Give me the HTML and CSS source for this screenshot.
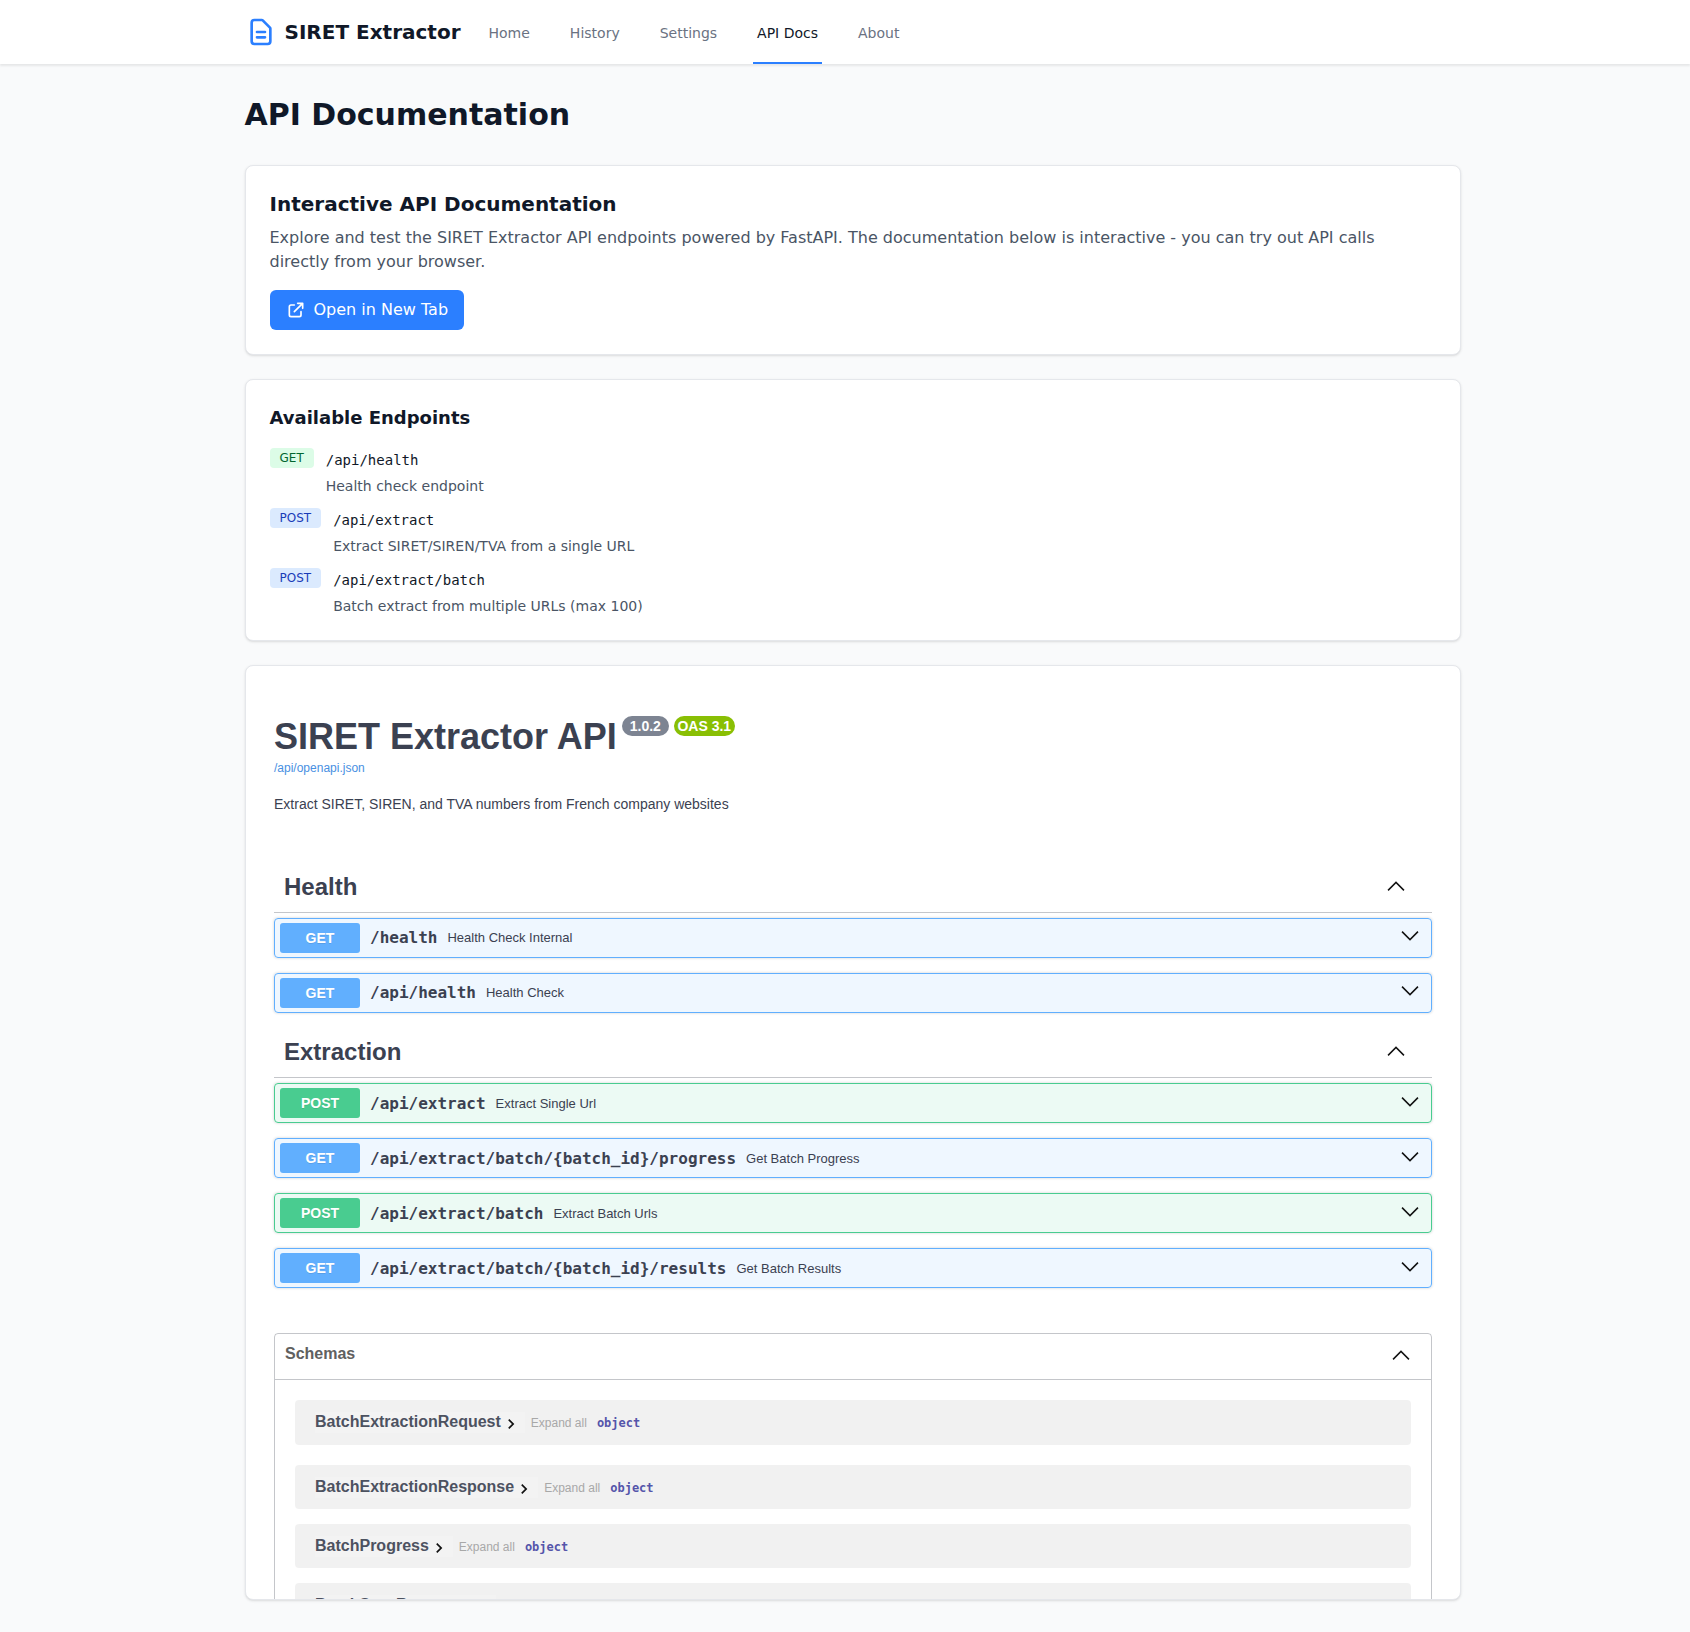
FILE: index.html
```html
<!DOCTYPE html>
<html lang="en">
<head>
<meta charset="utf-8">
<title>SIRET Extractor - API Docs</title>
<link rel="stylesheet" href="styles.css">
</head>
<body>
<nav class="nav">
  <div class="nav-inner">
    <a class="brand">
      <svg class="brand-icon" viewBox="0 0 24 24" fill="none" stroke="currentColor" stroke-width="2" stroke-linecap="round" stroke-linejoin="round"><path d="M9 12h6M9 16h6M17 21H7a2 2 0 0 1-2-2V5a2 2 0 0 1 2-2h5.586a1 1 0 0 1 .707.293l5.414 5.414a1 1 0 0 1 .293.707V19a2 2 0 0 1-2 2z"/></svg>
      <span>SIRET Extractor</span>
    </a>
    <div class="nav-links">
      <a class="nav-link">Home</a>
      <a class="nav-link">History</a>
      <a class="nav-link">Settings</a>
      <a class="nav-link active">API Docs</a>
      <a class="nav-link">About</a>
    </div>
  </div>
</nav>
<main class="main">
  <h1 class="page-title">API Documentation</h1>
  <section class="card intro">
    <h2 class="card-title">Interactive API Documentation</h2>
    <p class="intro-text">Explore and test the SIRET Extractor API endpoints powered by FastAPI. The documentation below is interactive - you can try out API calls directly from your browser.</p>
    <a class="btn">
      <svg class="btn-icon" viewBox="0 0 24 24" fill="none" stroke="currentColor" stroke-width="2" stroke-linecap="round" stroke-linejoin="round"><path d="M10 6H6a2 2 0 0 0-2 2v10a2 2 0 0 0 2 2h10a2 2 0 0 0 2-2v-4M14 4h6m0 0v6m0-6L10 14"/></svg>
      Open in New Tab
    </a>
  </section>
  <section class="card endpoints">
    <h2 class="card-subtitle">Available Endpoints</h2>
    <div class="ep-list">
      <div class="ep">
        <span class="ep-badge ep-get">GET</span>
        <div><code class="ep-path">/api/health</code><p class="ep-desc">Health check endpoint</p></div>
      </div>
      <div class="ep">
        <span class="ep-badge ep-post">POST</span>
        <div><code class="ep-path">/api/extract</code><p class="ep-desc">Extract SIRET/SIREN/TVA from a single URL</p></div>
      </div>
      <div class="ep">
        <span class="ep-badge ep-post">POST</span>
        <div><code class="ep-path">/api/extract/batch</code><p class="ep-desc">Batch extract from multiple URLs (max 100)</p></div>
      </div>
    </div>
  </section>
  <section class="card swagger">
    <div class="sw-info">
      <div class="sw-title-row">
        <h2 class="sw-title">SIRET Extractor API</h2>
        <span class="pill pill-version">1.0.2</span>
        <span class="pill pill-oas">OAS 3.1</span>
      </div>
      <a class="sw-link">/api/openapi.json</a>
      <p class="sw-desc">Extract SIRET, SIREN, and TVA numbers from French company websites</p>
    </div>

    <div class="tag tag-first">
      <h3 class="tag-name">Health</h3>
      <svg class="tag-chevron" viewBox="0 0 20 20"><path d="M17.418 14.908 10 7.49l-7.418 7.418L1.5 13.826 10 5.326l8.5 8.5z"/></svg>
    </div>
    <div class="op op-get"><span class="method">GET</span><span class="op-path">/health</span><span class="op-sum">Health Check Internal</span><svg class="op-chevron" viewBox="0 0 20 20"><path d="M17.418 6.109 10 13.527 2.582 6.109 1.5 7.191l8.5 8.5 8.5-8.5z"/></svg></div>
    <div class="op op-get"><span class="method">GET</span><span class="op-path">/api/health</span><span class="op-sum">Health Check</span><svg class="op-chevron" viewBox="0 0 20 20"><path d="M17.418 6.109 10 13.527 2.582 6.109 1.5 7.191l8.5 8.5 8.5-8.5z"/></svg></div>

    <div class="tag tag-next">
      <h3 class="tag-name">Extraction</h3>
      <svg class="tag-chevron" viewBox="0 0 20 20"><path d="M17.418 14.908 10 7.49l-7.418 7.418L1.5 13.826 10 5.326l8.5 8.5z"/></svg>
    </div>
    <div class="op op-post"><span class="method">POST</span><span class="op-path">/api/extract</span><span class="op-sum">Extract Single Url</span><svg class="op-chevron" viewBox="0 0 20 20"><path d="M17.418 6.109 10 13.527 2.582 6.109 1.5 7.191l8.5 8.5 8.5-8.5z"/></svg></div>
    <div class="op op-get"><span class="method">GET</span><span class="op-path">/api/extract/batch/{batch_id}/progress</span><span class="op-sum">Get Batch Progress</span><svg class="op-chevron" viewBox="0 0 20 20"><path d="M17.418 6.109 10 13.527 2.582 6.109 1.5 7.191l8.5 8.5 8.5-8.5z"/></svg></div>
    <div class="op op-post"><span class="method">POST</span><span class="op-path">/api/extract/batch</span><span class="op-sum">Extract Batch Urls</span><svg class="op-chevron" viewBox="0 0 20 20"><path d="M17.418 6.109 10 13.527 2.582 6.109 1.5 7.191l8.5 8.5 8.5-8.5z"/></svg></div>
    <div class="op op-get"><span class="method">GET</span><span class="op-path">/api/extract/batch/{batch_id}/results</span><span class="op-sum">Get Batch Results</span><svg class="op-chevron" viewBox="0 0 20 20"><path d="M17.418 6.109 10 13.527 2.582 6.109 1.5 7.191l8.5 8.5 8.5-8.5z"/></svg></div>

    <div class="schemas">
      <div class="schemas-head">
        <span class="schemas-title">Schemas</span>
        <svg class="tag-chevron schemas-chevron" viewBox="0 0 20 20"><path d="M17.418 14.908 10 7.49l-7.418 7.418L1.5 13.826 10 5.326l8.5 8.5z"/></svg>
      </div>
      <div class="schemas-body">
        <div class="model model-first"><span class="model-btn"><span class="model-name">BatchExtractionRequest</span><svg class="model-arrow" viewBox="0 0 24 24"><path d="M10 6 8.59 7.41 13.17 12l-4.58 4.59L10 18l6-6z"/></svg></span><span class="model-expand">Expand all</span><span class="model-type">object</span></div>
        <div class="model"><span class="model-btn"><span class="model-name">BatchExtractionResponse</span><svg class="model-arrow" viewBox="0 0 24 24"><path d="M10 6 8.59 7.41 13.17 12l-4.58 4.59L10 18l6-6z"/></svg></span><span class="model-expand">Expand all</span><span class="model-type">object</span></div>
        <div class="model"><span class="model-btn"><span class="model-name">BatchProgress</span><svg class="model-arrow" viewBox="0 0 24 24"><path d="M10 6 8.59 7.41 13.17 12l-4.58 4.59L10 18l6-6z"/></svg></span><span class="model-expand">Expand all</span><span class="model-type">object</span></div>
        <div class="model"><span class="model-btn"><span class="model-name">BatchStartResponse</span><svg class="model-arrow" viewBox="0 0 24 24"><path d="M10 6 8.59 7.41 13.17 12l-4.58 4.59L10 18l6-6z"/></svg></span><span class="model-expand">Expand all</span><span class="model-type">object</span></div>
      </div>
    </div>
  </section>
</main>
</body>
</html>
```
FILE: styles.css
```css
* { box-sizing: border-box; }
html, body { margin: 0; padding: 0; }
body {
  background: #f9fafb;
  font-family: "DejaVu Sans", sans-serif;
  color: #101828;
  height: 1632px;
  overflow: hidden;
}
p, h1, h2, h3 { margin: 0; }

/* nav */
.nav {
  height: 64px;
  background: #fff;
  box-shadow: 0 2px 2px rgba(0,0,0,.08);
  padding-left: 244.5px;
}
.nav-inner { display: flex; height: 64px; }
.brand { display: flex; align-items: center; gap: 8px; color: #101828; font-size: 20px; font-weight: 700; }
.brand-icon { width: 32px; height: 32px; color: #2b7fff; }
.nav-links { display: flex; gap: 32px; margin-left: 24px; }
.nav-link {
  display: flex; align-items: center;
  padding: 4px 4px 0;
  font-size: 14px; color: #6a7282;
  border-bottom: 2px solid transparent;
}
.nav-link.active { color: #101828; border-bottom-color: #2b7fff; }

/* page */
.main { width: 1216px; margin-left: 244.5px; padding-top: 33px; }
.page-title { font-size: 30px; line-height: 36px; font-weight: 700; margin-bottom: 32px; }
.card {
  background: #fff;
  border: 1px solid #e5e7eb;
  border-radius: 8px;
  box-shadow: 0 1px 3px rgba(0,0,0,.1), 0 1px 2px -1px rgba(0,0,0,.1);
  margin-bottom: 24px;
}
.intro { height: 190px; padding: 24px; }
.card-title { font-size: 20px; line-height: 28px; font-weight: 700; margin-bottom: 8px; }
.intro-text { font-size: 16px; line-height: 24px; color: #4a5565; margin-bottom: 16px; }
.btn {
  display: inline-flex; align-items: center; gap: 8px;
  height: 40px; padding: 0 16px 2px;
  background: #2b7fff; color: #fff;
  border-radius: 6px; font-size: 16px;
}
.btn-icon { width: 20px; height: 20px; margin-top: 2px; }

/* endpoints */
.endpoints { height: 262px; padding: 24px; }
.card-subtitle { font-size: 18px; line-height: 28px; font-weight: 700; margin-bottom: 16px; }
.ep-list { display: flex; flex-direction: column; gap: 12px; }
.ep { display: flex; align-items: flex-start; gap: 12px; }
.ep-badge { font-size: 12px; line-height: 16px; padding: 2px 10px; border-radius: 4px; }
.ep-get { background: #dcfce7; color: #016630; }
.ep-post { background: #dbeafe; color: #193cb8; }
.ep-path { display: block; font-family: "DejaVu Sans Mono", monospace; font-size: 14px; line-height: 24px; color: #101828; }
.ep-desc { font-size: 14px; line-height: 20px; color: #4a5565; margin-top: 4px; }

/* swagger */
.swagger {
  height: 935px;
  margin-bottom: 0;
  overflow: hidden;
  padding: 0 27.5px 0 28.5px;
  font-family: "Liberation Sans", sans-serif;
  color: #3b4151;
}
.sw-info { padding-top: 48px; height: 189px; }
.sw-title-row { display: flex; align-items: flex-start; height: 45px; }
.sw-title { font-size: 36px; line-height: 45px; font-weight: 700; color: #3b4151; }
.pill {
  font-size: 14px; line-height: 20px; font-weight: 700; color: #fff;
  border-radius: 57px; padding: 0 3.5px; margin-top: 2px;
}
.pill-version { background: #7d8492; padding: 0 8px; margin-left: 5px; }
.pill-oas { background: #89bf04; margin-left: 5px; }
.sw-link { display: block; font-size: 12px; line-height: 16px; color: #4990e2; margin-top: 1px; }
.sw-desc { font-size: 14px; line-height: 21px; margin-top: 18px; color: #3b4151; }

.tag {
  display: flex; align-items: flex-end; justify-content: space-between;
  padding: 0 26px 9px 10px;
  border-bottom: 1px solid rgba(59,65,81,.3);
  margin-bottom: 5px;
}
.tag-first { height: 57.6px; }
.tag-next { height: 50.42px; }
.tag-name { font-size: 24px; line-height: 32px; font-weight: 700; }
.tag-chevron { width: 20px; height: 20px; fill: #111; flex: none; margin-bottom: 7px; }

.op {
  display: flex; align-items: center;
  height: 40px;
  padding: 0 11px 0 5px;
  border: 1px solid;
  border-radius: 4px;
  margin-bottom: 15px;
  box-shadow: 0 0 3px rgba(0,0,0,.19);
}
.op-get { background: rgba(97,175,254,.1); border-color: #61affe; }
.op-post { background: rgba(73,204,144,.1); border-color: #49cc90; }
.method {
  width: 80px; height: 30px;
  display: flex; align-items: center; justify-content: center;
  border-radius: 3px;
  color: #fff; font-size: 14px; font-weight: 700;
  text-shadow: 0 1px 0 rgba(0,0,0,.1);
}
.op-get .method { background: #61affe; }
.op-post .method { background: #49cc90; }
.op-path { font-family: "DejaVu Sans Mono", monospace; font-size: 16px; font-weight: 700; margin-left: 10px; }
.op-sum { font-size: 13px; margin-left: 10px; }
.op-chevron { width: 20px; height: 20px; fill: #111; margin-left: auto; margin-top: -5px; }

.schemas {
  margin-top: 45px;
  border: 1px solid rgba(59,65,81,.3);
  border-radius: 4px;
}
.schemas-head {
  display: flex; align-items: center; justify-content: space-between;
  height: 46px;
  padding: 0 20px 0 10px;
  border-bottom: 1px solid rgba(59,65,81,.3);
}
.schemas-title { font-size: 16px; font-weight: 700; color: #606060; margin-top: -5px; }
.schemas-chevron { margin: -3px 0 0; }
.schemas-body { padding: 20px 20px 0; }
.model {
  display: flex; align-items: center;
  height: 44px;
  margin-bottom: 15px;
  padding: 0 20px;
  background: rgba(0,0,0,.055);
  border-radius: 4px;
}
.model-first { height: 45px; margin-bottom: 20px; }
.model-btn { display: flex; align-items: center; background: rgba(255,255,255,.15); height: 21px; padding-right: 4px; }
.model-name { font-size: 16px; font-weight: 700; color: #3b4151; opacity: .9; }
.model-first .model-name { margin-top: -2px; }
.model-arrow { width: 20px; height: 20px; fill: #111; margin-top: 3px; }
.model-expand { font-size: 12px; color: #a8a8a8; margin-left: 6px; margin-top: 2px; }
.model-type { font-family: "DejaVu Sans Mono", monospace; font-size: 12px; font-weight: 700; color: #55a; margin-left: 10px; margin-top: 2px; }
.model-first .model-expand, .model-first .model-type { margin-top: 0; }
```
